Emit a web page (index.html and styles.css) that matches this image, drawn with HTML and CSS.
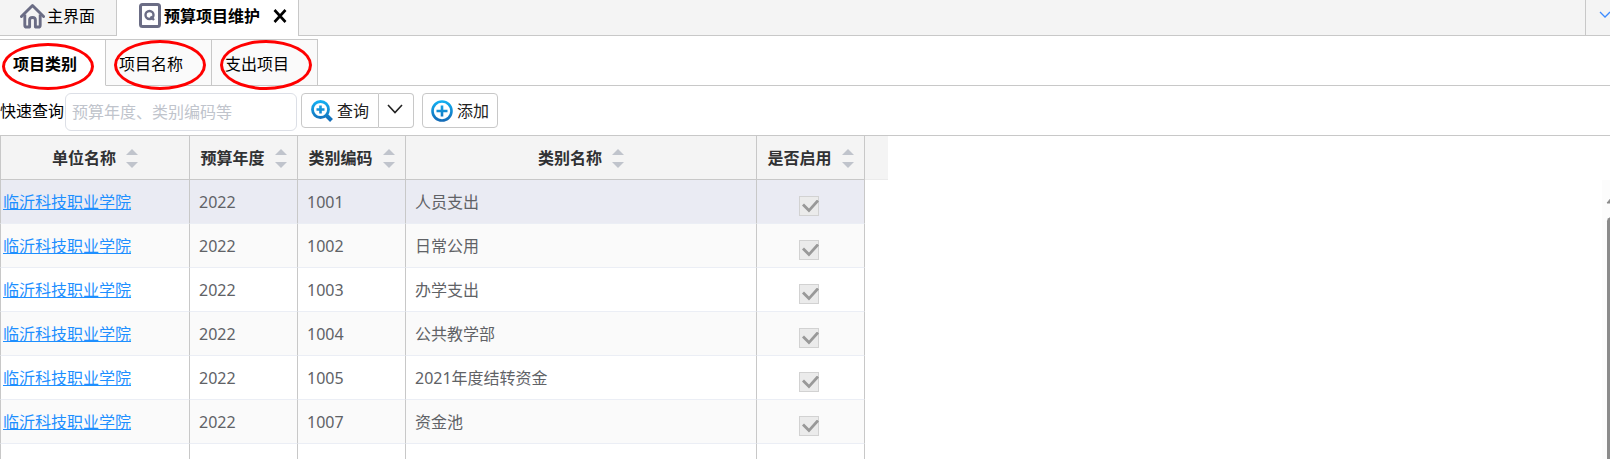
FILE: index.html
```html
<!DOCTYPE html>
<html lang="zh-CN">
<head>
    <meta charset="UTF-8">
    <meta name="viewport" content="width=device-width, initial-scale=1.0">
    <title>预算项目维护</title>
    <link rel="stylesheet" href="styles.css">
</head>
<body>
    <nav class="topbar">
        <a class="page-tab" href="#home">
            <svg class="icon-home" viewBox="0 0 26 28" fill="none" stroke="#6b6d85" stroke-width="3">
                <path d="M1.5 14.5 L13 3 L24.5 14.5" stroke-linejoin="round" stroke-linecap="round"/>
                <path d="M5 12.5 V23.5 Q5 25.5 7 25.5 H10 V18 Q10 15.500 13 15.500 Q16 15.500 16 18 V25.5 H19 Q21 25.5 21 23.5 V12.5" stroke-linejoin="round"/>
            </svg>
            <span>主界面</span>
        </a>
        <div class="page-tab current">
            <svg class="icon-page" viewBox="0 0 22 26" fill="none" stroke="#6b6d85">
                <rect x="1.5" y="1.5" width="19" height="22" rx="2" stroke-width="3"/>
                <circle cx="10.5" cy="12" r="4" stroke-width="2.4"/>
                <path d="M11.5 13.5 L15 17" stroke-width="2.4"/>
            </svg>
            <strong>预算项目维护</strong>
            <button class="close" aria-label="关闭">
                <svg viewBox="0 0 14 14" stroke="#000" stroke-width="2.6"><path d="M1.5 1 L12.5 13 M12.5 1 L1.5 13"/></svg>
            </button>
        </div>
        <button class="more" aria-label="更多">
            <svg viewBox="0 0 12 8" fill="none" stroke="#3d8bff" stroke-width="1.3"><path d="M1 1 L6 6 L11 1"/></svg>
        </button>
    </nav>

    <div class="tabs">
        <a class="tab active" href="#type">项目类别<span class="mark"></span></a>
        <a class="tab" href="#name">项目名称<span class="mark"></span></a>
        <a class="tab" href="#expense">支出项目<span class="mark"></span></a>
        <div class="tabs-rest"></div>
    </div>

    <form class="toolbar">
        <label for="keyword">快速查询</label>
        <input class="keyword" type="text" id="keyword" placeholder="预算年度、类别编码等">
        <div class="split">
            <button class="btn" type="button">
                <svg class="icon-btn" viewBox="0 0 22 22" fill="none" stroke="url(#blue)">
                    <defs>
                        <linearGradient id="blue" gradientUnits="userSpaceOnUse" x1="0" y1="0" x2="0" y2="22">
                            <stop offset="0" stop-color="#12b3f5"/>
                            <stop offset="1" stop-color="#1468b4"/>
                        </linearGradient>
                    </defs>
                    <circle cx="9.5" cy="9.5" r="8" stroke-width="2.8"/>
                    <path d="M9.5 5.5 V13.5 M5.5 9.5 H13.5" stroke-width="2.6"/>
                    <path d="M15.5 15.5 L20.5 20.5" stroke-width="4"/>
                </svg>
                <span>查询</span>
            </button>
            <button class="btn arrow" type="button" aria-label="更多查询">
                <svg viewBox="0 0 16 10" fill="none" stroke="#222" stroke-width="1.6"><path d="M1 1 L8 8.5 L15 1"/></svg>
            </button>
        </div>
        <button class="btn" type="button">
            <svg class="icon-btn" viewBox="0 0 22 22" fill="none" stroke="url(#blue)" stroke-width="2.6">
                <circle cx="11" cy="11" r="9.5"/>
                <path d="M11 5.5 V16.5 M5.5 11 H16.5"/>
            </svg>
            <span>添加</span>
        </button>
    </form>

    <div class="grid">
        <table>
            <colgroup>
                <col class="col-unit">
                <col class="col-code">
                <col class="col-code">
                <col class="col-name">
                <col class="col-code">
                <col class="col-gutter">
            </colgroup>
            <thead>
                <tr>
                    <th><button class="sort">单位名称<span class="caret"></span></button></th>
                    <th><button class="sort">预算年度<span class="caret"></span></button></th>
                    <th><button class="sort">类别编码<span class="caret"></span></button></th>
                    <th><button class="sort">类别名称<span class="caret"></span></button></th>
                    <th><button class="sort">是否启用<span class="caret"></span></button></th>
                    <th class="gutter"></th>
                </tr>
            </thead>
            <tbody>
                <tr class="selected">
                    <td><a href="#1001">临沂科技职业学院</a></td>
                    <td>2022</td>
                    <td>1001</td>
                    <td>人员支出</td>
                    <td><input type="checkbox" aria-label="是否启用" checked disabled></td>
                </tr>
                <tr>
                    <td><a href="#1002">临沂科技职业学院</a></td>
                    <td>2022</td>
                    <td>1002</td>
                    <td>日常公用</td>
                    <td><input type="checkbox" aria-label="是否启用" checked disabled></td>
                </tr>
                <tr>
                    <td><a href="#1003">临沂科技职业学院</a></td>
                    <td>2022</td>
                    <td>1003</td>
                    <td>办学支出</td>
                    <td><input type="checkbox" aria-label="是否启用" checked disabled></td>
                </tr>
                <tr>
                    <td><a href="#1004">临沂科技职业学院</a></td>
                    <td>2022</td>
                    <td>1004</td>
                    <td>公共教学部</td>
                    <td><input type="checkbox" aria-label="是否启用" checked disabled></td>
                </tr>
                <tr>
                    <td><a href="#1005">临沂科技职业学院</a></td>
                    <td>2022</td>
                    <td>1005</td>
                    <td>2021年度结转资金</td>
                    <td><input type="checkbox" aria-label="是否启用" checked disabled></td>
                </tr>
                <tr>
                    <td><a href="#1007">临沂科技职业学院</a></td>
                    <td>2022</td>
                    <td>1007</td>
                    <td>资金池</td>
                    <td><input type="checkbox" aria-label="是否启用" checked disabled></td>
                </tr>
                <tr class="filler">
                    <td></td>
                    <td></td>
                    <td></td>
                    <td></td>
                    <td></td>
                </tr>
            </tbody>
        </table>
        <div class="scrollbar">
            <svg class="scroll-up" viewBox="0 0 12 8"><path d="M1 7 L6 1 L11 7 Z" fill="#8b8b8b" stroke="#8b8b8b" stroke-linejoin="round"/></svg>
            <div class="thumb"></div>
        </div>
    </div>
</body>
</html>
```
FILE: styles.css
```css
* {
    box-sizing: border-box;
}
body {
    margin: 0;
    height: 100vh;
    overflow: hidden;
    display: flex;
    flex-direction: column;
    font-family: "Noto Sans", "Noto Sans CJK SC", sans-serif;
    font-size: 16px;
    line-height: 24px;
    color: #000;
    background-color: #fff;
}
a {
    color: inherit;
    text-decoration: none;
}
button {
    font: inherit;
    color: inherit;
    background: none;
    border: none;
    padding: 0;
    cursor: pointer;
}
svg {
    display: block;
    flex: none;
}

/* top page tabs */
.topbar {
    display: flex;
    flex: none;
    height: 36px;
    background-color: #f4f4f4;
    box-shadow: inset 0 -1px #c8c8c8;
}
.page-tab {
    display: flex;
    align-items: center;
    padding: 0 21px 4px 20px;
    border-right: 1px solid #c8c8c8;
    gap: 2px;
}
.page-tab.current {
    padding: 0 11px 4px 22px;
    gap: 3px;
    background-color: #fff;
}
.icon-home {
    width: 25px;
    height: 28px;
}
.icon-page {
    width: 22px;
    height: 26px;
}
.close {
    margin-left: 10px;
}
.close svg {
    width: 14px;
    height: 14px;
}
.more {
    width: 25px;
    margin-left: auto;
    padding: 0 0 6px 13px;
    border-left: 1px solid #c8c8c8;
    overflow: hidden;
}
.more svg {
    width: 12px;
    height: 8px;
}

/* category tabs */
.tabs {
    display: flex;
    flex: none;
    height: 47px;
    margin-top: 3px;
}
.tab {
    position: relative;
    padding: 12px 28px 8px 13px;
    border: 1px solid #c8c8c8;
    border-left: none;
    background-color: #fafafa;
}
.tab.active {
    font-weight: bold;
    border-bottom-color: #fff;
    background-color: #fff;
}
.tabs-rest {
    flex: 1;
    border-bottom: 1px solid #c8c8c8;
}
.mark {
    position: absolute;
    z-index: 1;
    top: 0;
    left: 8px;
    width: 92px;
    height: 50px;
    border: 3px solid #f00;
    border-radius: 50%;
}
.tab.active .mark {
    top: 3px;
    left: 2px;
    height: 47px;
}

/* search bar */
.toolbar {
    display: flex;
    flex: none;
    align-items: flex-start;
    padding: 7px 0 4px;
}
.toolbar label {
    padding: 6px 0;
}
.keyword {
    width: 232px;
    height: 38px;
    margin: 0 4px 0 1px;
    padding: 0 6px;
    font: inherit;
    border: 1px solid #dcdfe6;
    border-radius: 6px;
}
.keyword::placeholder {
    color: #c0c4cc;
    opacity: 1;
}
.split {
    display: flex;
    margin-right: 8px;
}
.btn {
    display: flex;
    align-items: center;
    gap: 4px;
    height: 35px;
    padding: 0 8px;
    color: #222;
    background-color: #fff;
    border: 1px solid #c8c8c8;
    border-radius: 4px;
}
.icon-btn {
    width: 22px;
    height: 22px;
}
.split .btn:first-child {
    padding: 0 9px;
    border-radius: 4px 0 0 4px;
}
.btn.arrow {
    width: 35px;
    padding: 0 10px 3px 8px;
    border-left: none;
    border-radius: 0 4px 4px 0;
}
.arrow svg {
    width: 16px;
    height: 10px;
}

/* table */
.grid {
    display: flex;
    flex: 1;
    align-items: flex-start;
    justify-content: space-between;
    min-height: 0;
    border-top: 1px solid #c8c8c8;
}
table {
    width: 888px;
    table-layout: fixed;
    border-collapse: separate;
    border-spacing: 0;
}
.col-unit {
    width: 190px;
}
.col-code {
    width: 108px;
}
.col-name {
    width: 351px;
}
.col-gutter {
    width: 23px;
}
th, td {
    height: 44px;
    padding: 0 9px;
    border-right: 1px solid #c8c8c8;
}
th {
    color: #303133;
    background-color: #f4f4f4;
    border-bottom: 1px solid #c8c8c8;
}
td {
    color: #606266;
    border-bottom: 1px solid #ebeef5;
}
th:first-child, td:first-child {
    padding: 0 2px;
    border-left: 1px solid #c8c8c8;
}
th.gutter {
    border-right: none;
    border-bottom-color: #ebebeb;
}
.sort {
    display: flex;
    align-items: center;
    justify-content: center;
    gap: 10px;
    width: 100%;
}
.caret {
    display: flex;
    flex-direction: column;
    gap: 7px;
    padding-top: 2px;
}
.caret::before, .caret::after {
    content: "";
    border: 6px solid transparent;
}
.caret::before {
    border-top: none;
    border-bottom-color: #c0c4cc;
}
.caret::after {
    border-bottom: none;
    border-top-color: #c0c4cc;
}
td a {
    color: #1e8fff;
    text-decoration: underline;
}
tbody tr:nth-child(even) td {
    background-color: #fafafa;
}
tbody tr.selected td {
    background-color: #eaebf3;
}
td:last-child {
    padding: 8px 3px 0 0;
}
tbody tr.filler td {
    height: 15px;
    padding: 0;
    border-bottom: none;
}
td input {
    appearance: none;
    display: block;
    width: 20px;
    height: 20px;
    margin: 0 auto;
    border: 1px solid #d2d2d2;
    background-color: #ebebeb;
}
td input:checked::before {
    content: "";
    display: block;
    width: 17px;
    height: 14px;
    margin: 3px 0 0 2px;
    background-color: #999;
    clip-path: polygon(0 6px, 2px 4px, 7px 9px, 15px 0, 17px 2px, 7px 13px);
}

/* scrollbar */
.scrollbar {
    display: flex;
    flex-direction: column;
    gap: 13px;
    align-self: stretch;
    width: 8px;
    margin-top: 44px;
    padding: 16px 0 0 4px;
    background-color: #fcfcfc;
    overflow: hidden;
}
.scroll-up {
    width: 12px;
    height: 8px;
}
.thumb {
    flex: 1;
    width: 9px;
    margin-left: 1px;
    border-radius: 5px 5px 0 0;
    background-color: #8b8b8b;
}
```
